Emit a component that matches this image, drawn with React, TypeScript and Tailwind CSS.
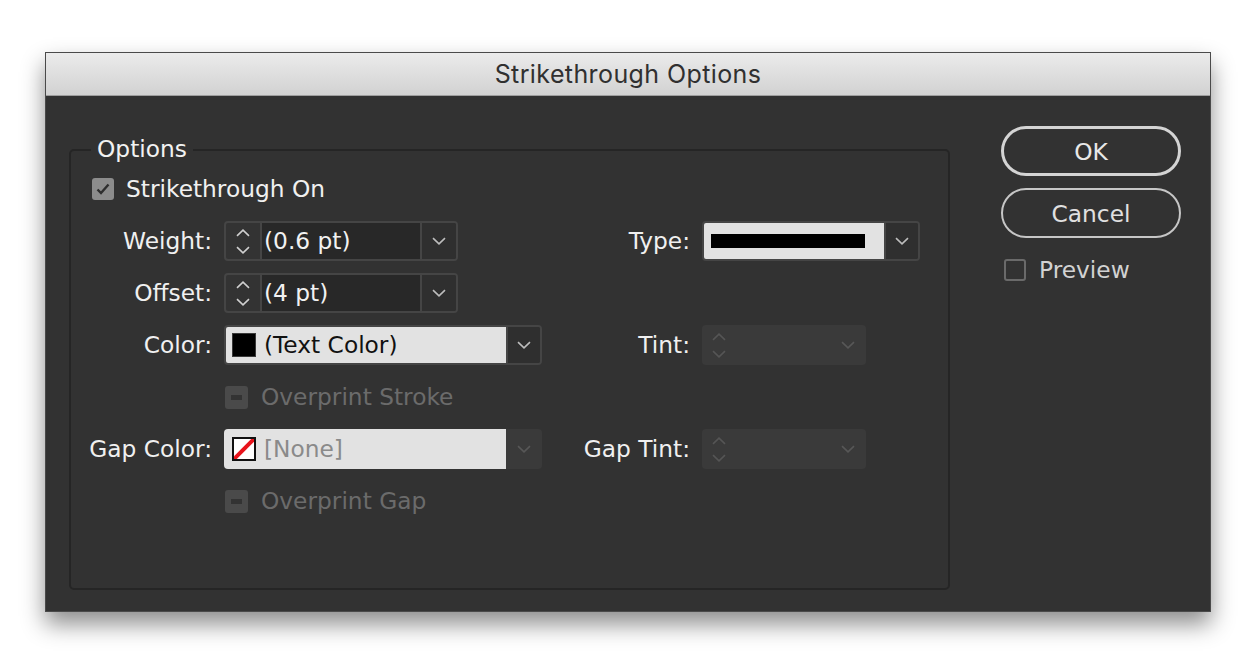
import React from "react";

const F = { fontFamily: '"DejaVu Sans", "Noto Sans", sans-serif' };

function ChevDown({ color = "#c4c4c4", w = 14 }: { color?: string; w?: number }) {
  return (
    <svg width={w} height={8} viewBox="0 0 14 8" fill="none">
      <path d="M1 1.2 L7 6.8 L13 1.2" stroke={color} strokeWidth="1.6" />
    </svg>
  );
}
function ChevUp({ color = "#c4c4c4", w = 14 }: { color?: string; w?: number }) {
  return (
    <svg width={w} height={8} viewBox="0 0 14 8" fill="none">
      <path d="M1 6.8 L7 1.2 L13 6.8" stroke={color} strokeWidth="1.6" />
    </svg>
  );
}

function Spinner({ color = "#cfcfcf" }: { color?: string }) {
  return (
    <div className="flex flex-col items-center justify-center gap-[9px] w-[34px] h-full">
      <ChevUp color={color} />
      <ChevDown color={color} />
    </div>
  );
}

function NumCombo({ value }: { value: string }) {
  return (
    <div className="flex h-[40px] w-[234px] rounded-[4px] border-2 border-[#454545] bg-[#333333] overflow-hidden">
      <Spinner />
      <div className="flex-1 bg-[#282828] border-l-2 border-[#454545] flex items-center pl-[2px] text-[23.3px] text-[#f2f2f2]" style={F}>
        {value}
      </div>
      <div className="w-[36px] border-l-2 border-[#454545] bg-[#2f2f2f] flex items-center justify-center">
        <ChevDown color="#bdbdbd" />
      </div>
    </div>
  );
}

function DisabledCombo() {
  return (
    <div className="flex h-[40px] w-[164px] rounded-[4px] bg-[#3a3a3a] items-center">
      <Spinner color="#555555" />
      <div className="flex-1" />
      <div className="w-[36px] flex items-center justify-center">
        <ChevDown color="#575757" />
      </div>
    </div>
  );
}

function Label({ children, w }: { children: React.ReactNode; w: string }) {
  return (
    <div className={`${w} text-right text-[23.3px] text-[#f0f0f0] shrink-0`} style={F}>
      {children}
    </div>
  );
}

function DisabledCheck({ label }: { label: string }) {
  return (
    <div className="flex items-center h-[40px] pl-[1px]">
      <div className="w-[23px] h-[23px] rounded-[3px] bg-[#4a4a4a] flex items-center justify-center">
        <div className="w-[11px] h-[5px] bg-[#333333]" />
      </div>
      <span className="ml-[13px] text-[23.3px] text-[#6b6b6b]" style={F}>
        {label}
      </span>
    </div>
  );
}

export default function App() {
  return (
    <div className="w-[1257px] h-[664px] bg-white pt-[52px] pl-[45px]">
      <div className="w-[1166px] h-[560px] flex flex-col border border-[#4a4a4a] shadow-[0_12px_22px_rgba(0,0,0,0.45)]">
        <div className="h-[43px] shrink-0 bg-gradient-to-b from-[#ebebeb] to-[#d2d2d2] border-b border-[#9e9e9e] flex items-center justify-center">
          <span className="text-[25px] tracking-[0.4px] text-[#303030] mt-[2px]" style={{ fontFamily: 'Inter, "Liberation Sans", sans-serif' }}>
            Strikethrough Options
          </span>
        </div>
        <div className="flex-1 bg-[#323232] flex items-start pl-[23px] pt-[30px]">
          <div className="relative mt-[23px] w-[881px] h-[441px] rounded-[5px] border-2 border-[#252525] pt-[18px]">
            <span className="absolute left-[20px] top-[-17px] px-[6px] bg-[#323232] text-[23.3px] text-[#f2f2f2] leading-[30px]" style={F}>
              Options
            </span>
            <div className="flex flex-col gap-[12px]">
              {/* Strikethrough On */}
              <div className="flex items-center h-[40px] pl-[21px]">
                <div className="w-[22px] h-[22px] rounded-[3px] bg-[#8c8c8c] flex items-center justify-center">
                  <svg width="14" height="12" viewBox="0 0 14 12" fill="none">
                    <path d="M1.5 6.5 L5 10 L12.5 1.5" stroke="#2e2e2e" strokeWidth="2.4" />
                  </svg>
                </div>
                <span className="ml-[12px] text-[23.3px] text-[#f0f0f0]" style={F}>
                  Strikethrough On
                </span>
              </div>
              {/* Weight + Type */}
              <div className="flex items-center h-[40px]">
                <Label w="w-[141px]">Weight:</Label>
                <div className="w-[12px]" />
                <div className="w-[318px] shrink-0">
                  <NumCombo value="(0.6 pt)" />
                </div>
                <Label w="w-[148px]">Type:</Label>
                <div className="w-[12px]" />
                <div className="flex h-[40px] w-[218px] rounded-[4px] border-2 border-[#454545] overflow-hidden">
                  <div className="w-[180px] bg-[#e2e2e2] flex items-center pl-[7px]">
                    <div className="w-[154px] h-[14px] bg-black" />
                  </div>
                  <div className="flex-1 border-l-2 border-[#454545] bg-[#2f2f2f] flex items-center justify-center">
                    <ChevDown color="#bdbdbd" />
                  </div>
                </div>
              </div>
              {/* Offset */}
              <div className="flex items-center h-[40px]">
                <Label w="w-[141px]">Offset:</Label>
                <div className="w-[12px]" />
                <NumCombo value="(4 pt)" />
              </div>
              {/* Color + Tint */}
              <div className="flex items-center h-[40px]">
                <Label w="w-[141px]">Color:</Label>
                <div className="w-[12px]" />
                <div className="w-[318px] shrink-0 flex h-[40px] rounded-[4px] border-2 border-[#454545] overflow-hidden">
                  <div className="w-[280px] bg-[#e2e2e2] flex items-center pl-[6px]">
                    <div className="w-[24px] h-[24px] bg-black border border-[#3a3a3a]" />
                    <span className="ml-[8px] text-[23.3px] text-[#111111]" style={F}>
                      (Text Color)
                    </span>
                  </div>
                  <div className="flex-1 border-l-2 border-[#454545] bg-[#2f2f2f] flex items-center justify-center">
                    <ChevDown color="#bdbdbd" />
                  </div>
                </div>
                <Label w="w-[148px]">Tint:</Label>
                <div className="w-[12px]" />
                <DisabledCombo />
              </div>
              {/* Overprint Stroke */}
              <div className="flex items-center h-[40px]">
                <div className="w-[153px] shrink-0" />
                <DisabledCheck label="Overprint Stroke" />
              </div>
              {/* Gap Color + Gap Tint */}
              <div className="flex items-center h-[40px]">
                <Label w="w-[141px]">Gap Color:</Label>
                <div className="w-[12px]" />
                <div className="w-[318px] shrink-0 flex h-[40px] rounded-[4px] bg-[#3a3a3a] overflow-hidden">
                  <div className="w-[282px] bg-[#e2e2e2] flex items-center pl-[8px]">
                    <div className="w-[24px] h-[24px] bg-white border-2 border-[#111111] overflow-hidden">
                      <svg width="20" height="20" viewBox="0 0 20 20">
                        <path d="M0 20 L20 0" stroke="#e8141c" strokeWidth="4" />
                      </svg>
                    </div>
                    <span className="ml-[8px] text-[23.3px] text-[#8a8a8a]" style={F}>
                      [None]
                    </span>
                  </div>
                  <div className="flex-1 flex items-center justify-center">
                    <ChevDown color="#575757" />
                  </div>
                </div>
                <Label w="w-[148px]">Gap Tint:</Label>
                <div className="w-[12px]" />
                <DisabledCombo />
              </div>
              {/* Overprint Gap */}
              <div className="flex items-center h-[40px]">
                <div className="w-[153px] shrink-0" />
                <DisabledCheck label="Overprint Gap" />
              </div>
            </div>
          </div>
          <div className="ml-[51px] w-[180px] flex flex-col">
            <button className="h-[50px] rounded-full border-[3px] border-[#d4d4d4] text-[23.3px] text-[#e8e8e8] pt-[2px]" style={F}>
              OK
            </button>
            <button className="mt-[12px] h-[50px] rounded-full border-2 border-[#c6c6c6] text-[23.3px] text-[#e0e0e0] pt-[2px]" style={F}>
              Cancel
            </button>
            <div className="mt-[15px] flex items-center pl-[3px]">
              <div className="w-[22px] h-[22px] rounded-[3px] border-2 border-[#6a6a6a]" />
              <span className="ml-[13px] text-[23.3px] text-[#d2d2d2]" style={F}>
                Preview
              </span>
            </div>
          </div>
        </div>
      </div>
    </div>
  );
}
